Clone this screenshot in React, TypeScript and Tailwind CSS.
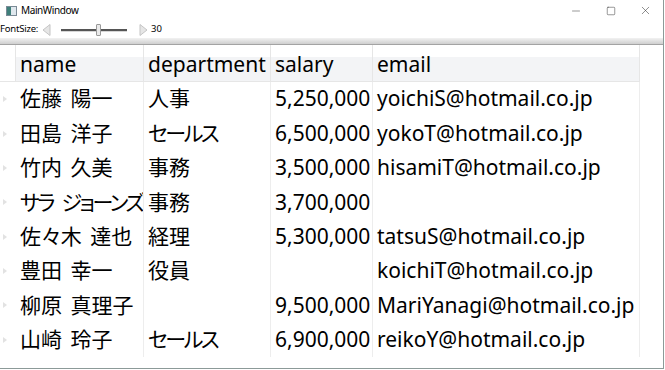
import { Minus, Square, X } from "lucide-react";

type Row = { name: string; department: string; salary: string; email: string };

const ROWS: Row[] = [
  { name: "佐藤 陽一", department: "人事", salary: "5,250,000", email: "yoichiS@hotmail.co.jp" },
  { name: "田島 洋子", department: "セールス", salary: "6,500,000", email: "yokoT@hotmail.co.jp" },
  { name: "竹内 久美", department: "事務", salary: "3,500,000", email: "hisamiT@hotmail.co.jp" },
  { name: "サラ ジョーンズ", department: "事務", salary: "3,700,000", email: "" },
  { name: "佐々木 達也", department: "経理", salary: "5,300,000", email: "tatsuS@hotmail.co.jp" },
  { name: "豊田 幸一", department: "役員", salary: "", email: "koichiT@hotmail.co.jp" },
  { name: "柳原 真理子", department: "", salary: "9,500,000", email: "MariYanagi@hotmail.co.jp" },
  { name: "山崎 玲子", department: "セールス", salary: "6,900,000", email: "reikoY@hotmail.co.jp" },
];

const COLS = "grid-cols-[16px_128px_127px_102px_267px]";

// katakana in the reference font is much narrower than in Noto Sans CJK
function CellText({ text }: { text: string }) {
  const parts = text.split(/([\u30A0-\u30FF]+)/).filter(Boolean);
  return (
    <>
      {parts.map((p, i) =>
        /[\u30A0-\u30FF]/.test(p) ? (
          <span key={i} className="tracking-[-2.5px]">
            {p}
          </span>
        ) : (
          <span key={i} className="whitespace-pre">{p}</span>
        )
      )}
    </>
  );
}

function TitleBar() {
  return (
    <div className="flex h-[21px] items-center">
      <div className="ml-[6px] flex h-[10px] w-[11px] border border-[#7a8a96] bg-[#dfe8ee]">
        <div className="w-[4px] bg-[#3f7f7a]" />
      </div>
      <span className="ml-[4px] text-[10px] tracking-[-0.4px] text-black">MainWindow</span>
      <div className="ml-auto flex h-full items-center text-[#333]">
        <div className="flex w-[35px] justify-center">
          <Minus size={12} strokeWidth={1} />
        </div>
        <div className="flex w-[35px] justify-center">
          <Square size={10} strokeWidth={1.2} />
        </div>
        <div className="flex w-[35px] justify-center">
          <X size={13} strokeWidth={1} />
        </div>
      </div>
    </div>
  );
}

function SliderRow() {
  return (
    <div className="flex h-[17px] items-center text-black">
      <span className="w-[36px] whitespace-nowrap text-[9.5px] tracking-[-0.2px]">FontSize:</span>
      <svg width="9" height="12" viewBox="0 0 9 12" className="ml-[6px]">
        <polygon points="8,0.5 8,11.5 1,6" fill="#e6e6e6" stroke="#c4c4c4" />
      </svg>
      <div className="relative ml-[10px] h-[12px] w-[66px]">
        <div className="absolute left-0 right-0 top-[5px] h-[2px] bg-[#555] shadow-[0_1px_0_#d6d6d6]" />
        <div className="absolute left-[35px] top-0 h-[12px] w-[5px] rounded-[1px] border border-[#9a9a9a] bg-[#eaeaea]" />
      </div>
      <svg width="9" height="12" viewBox="0 0 9 12" className="ml-[12px]">
        <polygon points="1,0.5 1,11.5 8,6" fill="#e6e6e6" stroke="#c4c4c4" />
      </svg>
      <span className="ml-[3px] text-[9.5px]">30</span>
    </div>
  );
}

export default function App() {
  return (
    <div className="h-[370px] w-[665px] overflow-hidden bg-white font-['Segoe_UI','Noto_Sans','Noto_Sans_CJK_JP',sans-serif]">
      <div className="flex h-[369px] w-[664px] flex-col border-b border-r border-[#8c9a98]">
        <TitleBar />
        <SliderRow />
        <div className="h-[7px] border-b border-[#a3a3a3] bg-gradient-to-b from-[#f2f2f2] to-[#cfcfcf]" />
        <div className="flex-1 text-[21px] text-black [font-feature-settings:'palt'] [word-spacing:3px]">
          <div className={`grid h-[37px] ${COLS}`}>
            <div className="border-b border-r border-[#e6e6e6]" />
            {["name", "department", "salary", "email"].map((h) => (
              <div key={h} className="flex flex-col border-b border-r border-[#e6e6e6]">
                <div className="h-[12px]" />
                <div className="flex flex-1 items-center bg-[#f3f4f6] pl-[4px] leading-none">
                  <span className="-mt-[10px]">{h}</span>
                </div>
              </div>
            ))}
          </div>
          {ROWS.map((r, i) => (
            <div key={i} className={`grid h-[34.375px] ${COLS}`}>
              <div className="flex items-center pl-[3px]">
                <svg width="4" height="6" viewBox="0 0 4 6">
                  <polygon points="0,0 4,3 0,6" fill="#e2e2e2" />
                </svg>
              </div>
              {[r.name, r.department, r.salary, r.email].map((v, j) => (
                <div key={j} className="flex items-center overflow-hidden whitespace-nowrap border-r border-[#ededed] pl-[4px]">
                  <CellText text={v} />
                </div>
              ))}
            </div>
          ))}
        </div>
      </div>
    </div>
  );
}
